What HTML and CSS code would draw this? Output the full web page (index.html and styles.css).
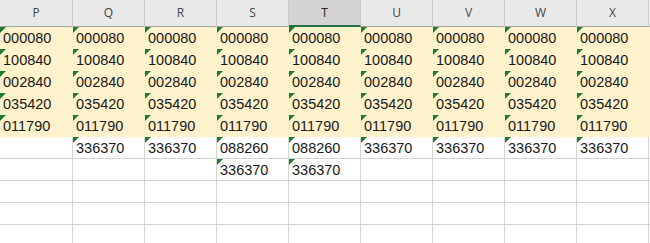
FILE: index.html
```html
<!DOCTYPE html>
<html>
<head>
<meta charset="utf-8">
<link rel="stylesheet" href="styles.css">
</head>
<body>
<div class="sheet">
  <div class="hd">P</div><div class="hd">Q</div><div class="hd">R</div><div class="hd">S</div><div class="hd sel">T</div><div class="hd">U</div><div class="hd">V</div><div class="hd">W</div><div class="hd">X</div><div class="hd"></div>

  <div class="c y t">000080</div><div class="c y t">000080</div><div class="c y t">000080</div><div class="c y t">000080</div><div class="c y t">000080</div><div class="c y t">000080</div><div class="c y t">000080</div><div class="c y t">000080</div><div class="c y t">000080</div><div class="c y"></div>
  <div class="c y t">100840</div><div class="c y t">100840</div><div class="c y t">100840</div><div class="c y t">100840</div><div class="c y t">100840</div><div class="c y t">100840</div><div class="c y t">100840</div><div class="c y t">100840</div><div class="c y t">100840</div><div class="c y"></div>
  <div class="c y t">002840</div><div class="c y t">002840</div><div class="c y t">002840</div><div class="c y t">002840</div><div class="c y t">002840</div><div class="c y t">002840</div><div class="c y t">002840</div><div class="c y t">002840</div><div class="c y t">002840</div><div class="c y"></div>
  <div class="c y t">035420</div><div class="c y t">035420</div><div class="c y t">035420</div><div class="c y t">035420</div><div class="c y t">035420</div><div class="c y t">035420</div><div class="c y t">035420</div><div class="c y t">035420</div><div class="c y t">035420</div><div class="c y"></div>
  <div class="c y t">011790</div><div class="c y t">011790</div><div class="c y t">011790</div><div class="c y t">011790</div><div class="c y t">011790</div><div class="c y t">011790</div><div class="c y t">011790</div><div class="c y t">011790</div><div class="c y t">011790</div><div class="c y"></div>

  <div class="c"></div><div class="c t">336370</div><div class="c t">336370</div><div class="c t">088260</div><div class="c t">088260</div><div class="c t">336370</div><div class="c t">336370</div><div class="c t">336370</div><div class="c t">336370</div><div class="c"></div>
  <div class="c"></div><div class="c"></div><div class="c"></div><div class="c t">336370</div><div class="c t">336370</div><div class="c"></div><div class="c"></div><div class="c"></div><div class="c"></div><div class="c"></div>
  <div class="c"></div><div class="c"></div><div class="c"></div><div class="c"></div><div class="c"></div><div class="c"></div><div class="c"></div><div class="c"></div><div class="c"></div><div class="c"></div>
  <div class="c"></div><div class="c"></div><div class="c"></div><div class="c"></div><div class="c"></div><div class="c"></div><div class="c"></div><div class="c"></div><div class="c"></div><div class="c"></div>
  <div class="c"></div><div class="c"></div><div class="c"></div><div class="c"></div><div class="c"></div><div class="c"></div><div class="c"></div><div class="c"></div><div class="c"></div><div class="c"></div>
</div>
</body>
</html>
```

FILE: styles.css
```css
html, body {
  margin: 0;
  padding: 0;
  background: #ffffff;
  overflow: hidden;
}

.sheet {
  display: grid;
  grid-template-columns: 73px repeat(9, 72px);
  grid-auto-rows: 22px;
  grid-template-rows: 27px;
  width: 722px;
}

.hd {
  box-sizing: border-box;
  background: #e9e9e9;
  border-right: 1px solid #c9c9c9;
  border-bottom: 1px solid #a6a6a6;
  font-family: "Open Sans", "Noto Sans", sans-serif;
  font-size: 12px;
  color: #444444;
  display: flex;
  align-items: center;
  justify-content: center;
  padding-bottom: 1px;
}

.hd.sel {
  background: #d3d3d3;
  color: #262626;
  border-bottom: 2px solid #217346;
}

.c {
  box-sizing: border-box;
  position: relative;
  background: #ffffff;
  border-right: 1px solid #d4d4d4;
  border-bottom: 1px solid #d4d4d4;
  font-family: "Liberation Sans", Arial, sans-serif;
  font-size: 14.5px;
  line-height: 21px;
  color: #1a1a1a;
  padding-left: 3px;
  padding-top: 1px;
  white-space: nowrap;
  overflow: hidden;
}

.c.y {
  background: #fff2cc;
  border-color: #fff2cc;
}

.c.t::before {
  content: "";
  position: absolute;
  left: 0;
  top: 0;
  width: 0;
  height: 0;
  border-top: 6px solid #1e7b34;
  border-right: 6px solid transparent;
}
```
